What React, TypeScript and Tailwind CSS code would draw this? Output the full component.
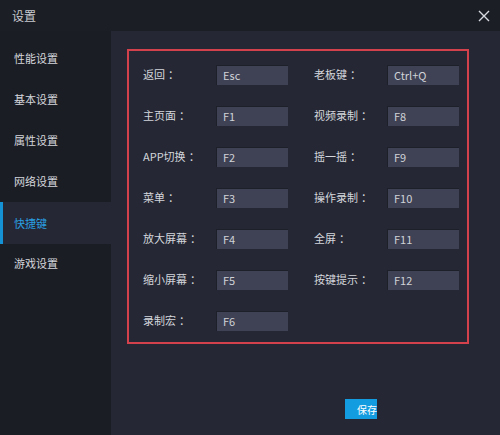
import React from "react";

const menu = ["性能设置", "基本设置", "属性设置", "网络设置", "快捷键", "游戏设置"];

const rows: [string, string, string?, string?][] = [
  ["返回", "Esc", "老板键", "Ctrl+Q"],
  ["主页面", "F1", "视频录制", "F8"],
  ["APP切换", "F2", "摇一摇", "F9"],
  ["菜单", "F3", "操作录制", "F10"],
  ["放大屏幕", "F4", "全屏", "F11"],
  ["缩小屏幕", "F5", "按键提示", "F12"],
  ["录制宏", "F6"],
];

function Field({ label, value }: { label: string; value: string }) {
  return (
    <div className="flex items-center h-[41px]">
      <div className="w-[73px] text-[11px] text-[#d4d6dc] whitespace-nowrap">
        {label}
        <span className="ml-[3px]">：</span>
      </div>
      <div className="w-[72px] h-[20px] bg-[#3f4254] border-t border-l border-[#1e2029] flex items-center pl-[6px] text-[11px] text-[#d0d2d8]">
        {value}
      </div>
    </div>
  );
}

export default function App() {
  return (
    <div
      className="w-[500px] h-[435px] flex flex-col bg-[#1b1d24] overflow-hidden"
      style={{ fontFamily: '"Noto Sans CJK SC", "Noto Sans", sans-serif' }}
    >
      <div className="h-[31px] shrink-0 bg-[#1c1e25] flex items-center justify-between pl-[12px] pr-[10px]">
        <span className="text-[12px] text-[#c8cad0]">设置</span>
        <svg width="12" height="12" viewBox="0 0 12 12">
          <path d="M1 1L11 11M11 1L1 11" stroke="#d8dae0" strokeWidth="1.4" />
        </svg>
      </div>
      <div className="flex-1 flex">
        <div className="w-[111px] shrink-0 bg-[#1b1d24] pt-[7px] flex flex-col">
          {menu.map((m) => {
            const active = m === "快捷键";
            return (
              <div
                key={m}
                className={
                  active
                    ? "h-[42px] -mb-[1px] flex items-center pl-[11px] bg-[#252834] border-l-[3px] border-[#1592d6] text-[11px] text-[#2a9fe2]"
                    : "h-[41px] flex items-center pl-[14px] text-[11px] text-[#d4d6dc]"
                }
              >
                {m}
              </div>
            );
          })}
        </div>
        <div className="flex-1 bg-[#252834] pt-[18px] pl-[16px]">
          <div className="w-[342px] h-[295px] border-2 border-[#d2414c] pl-[14px] pt-[3px]">
            <div className="grid grid-cols-[171px_145px]">
              {rows.map((r, i) => (
                <React.Fragment key={i}>
                  <Field label={r[0]} value={r[1]} />
                  {r[2] ? <Field label={r[2]} value={r[3] as string} /> : <div />}
                </React.Fragment>
              ))}
            </div>
          </div>
          <div className="mt-[55px] ml-[218px] w-[32px] h-[20px] bg-[#149ce0] flex items-center pl-[12px] text-[10px] text-white whitespace-nowrap">
            保存
          </div>
        </div>
      </div>
    </div>
  );
}
